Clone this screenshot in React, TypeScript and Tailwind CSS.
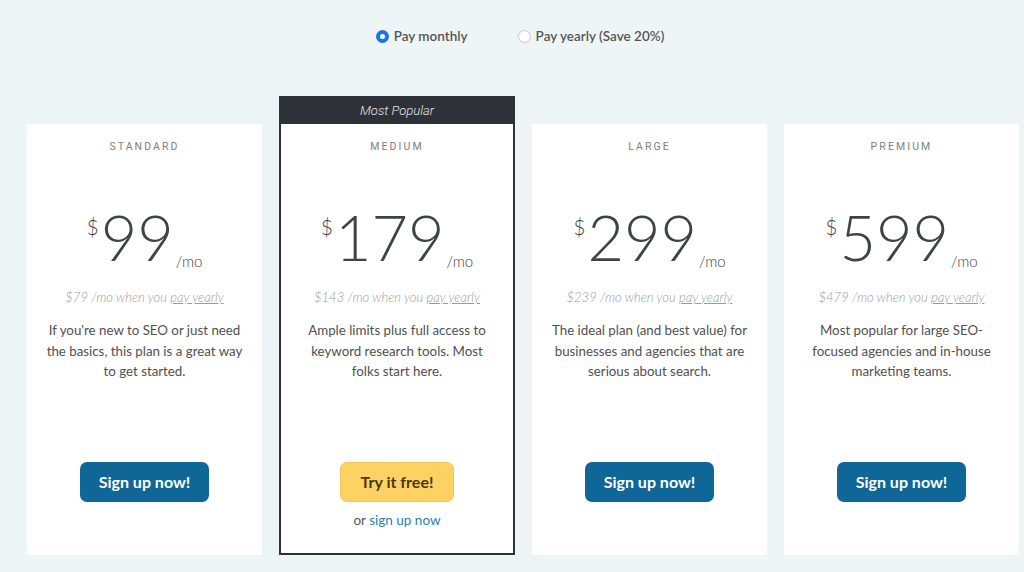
import React, { useState } from 'react';

type Plan = {
  name: string;
  price: string;
  yearly: string;
  desc: string;
  popular?: boolean;
};

const plans: Plan[] = [
  {
    name: 'Standard',
    price: '99',
    yearly: '$79',
    desc: "If you're new to SEO or just need the basics, this plan is a great way to get started.",
  },
  {
    name: 'Medium',
    price: '179',
    yearly: '$143',
    desc: 'Ample limits plus full access to keyword research tools. Most folks start here.',
    popular: true,
  },
  {
    name: 'Large',
    price: '299',
    yearly: '$239',
    desc: 'The ideal plan (and best value) for businesses and agencies that are serious about search.',
  },
  {
    name: 'Premium',
    price: '599',
    yearly: '$479',
    desc: 'Most popular for large SEO-focused agencies and in-house marketing teams.',
  },
];

const Radio = ({ checked }: { checked: boolean }) =>
  checked ? (
    <span className="box-border h-[13px] w-[13px] rounded-full border-[4px] border-[#1a73e8] bg-white" />
  ) : (
    <span className="box-border h-[13px] w-[13px] rounded-full border border-[#c8c8c8] bg-white" />
  );

const PlanBody = ({ plan }: { plan: Plan }) => (
  <div className="flex flex-1 flex-col items-center pt-[17px]">
    <p className="font-[Roboto,sans-serif] text-[10.5px] leading-[12px] tracking-[0.2em] text-[#808080] uppercase">
      {plan.name}
    </p>
    <div className="mt-[52px] flex items-start justify-center text-[#3f4346]">
      <span className="mt-[11px] mr-[2px] text-[21px] leading-none font-light">$</span>
      <span className="text-[63px] leading-none font-light">{plan.price}</span>
      <span className="mb-[-1px] ml-[2px] self-end text-[15px] leading-none font-light">/mo</span>
    </div>
    <p className="mt-[21px] text-[13px] leading-[16px] font-light text-[#9a9a9a] italic">
      {plan.yearly} /mo when you <span className="underline">pay yearly</span>
    </p>
    <p className="mt-[15px] px-[15px] text-center text-[13.3px] leading-[20.5px] text-[#505050]">
      {plan.desc}
    </p>
  </div>
);

export default function App() {
  const [yearly, setYearly] = useState(false);

  return (
    <div className="min-h-[572px] bg-[#eef5f6] font-[Lato,sans-serif]">
      <div className="flex h-[44px] items-end justify-center gap-[50px] pl-[16px]">
        <button className="flex h-[16px] items-center gap-[5px]" onClick={() => setYearly(false)}>
          <Radio checked={!yearly} />
          <span className="text-[13.5px] font-semibold text-[#555]">Pay monthly</span>
        </button>
        <button className="flex h-[16px] items-center gap-[5px]" onClick={() => setYearly(true)}>
          <Radio checked={yearly} />
          <span className="text-[13.5px] font-semibold text-[#555]">Pay yearly (Save 20%)</span>
        </button>
      </div>

      <div className="mt-[52px] flex items-end gap-[17px] pl-[27px]">
        {plans.map((plan) =>
          plan.popular ? (
            <div
              key={plan.name}
              className="box-border flex h-[459px] w-[236px] shrink-0 flex-col border-2 border-[#2f3139] bg-white"
            >
              <div className="flex h-[26px] items-center justify-center bg-[#2f3139] font-[Roboto,sans-serif] text-[13px] font-light text-[#e6e6e6] italic">
                Most Popular
              </div>
              <PlanBody plan={plan} />
              <div className="flex h-[91px] flex-col items-center">
                <button className="box-border h-[40px] w-[114px] rounded-[7px] border border-[#f3c555] bg-[#fdd262] text-[16px] font-bold text-[#4a3710]">
                  Try it free!
                </button>
                <p className="mt-[10px] text-[13.5px] leading-[16px] text-[#555]">
                  or <a className="text-[#2b7fb1]">sign up now</a>
                </p>
              </div>
            </div>
          ) : (
            <div key={plan.name} className="flex h-[431px] w-[235px] shrink-0 flex-col bg-white">
              <PlanBody plan={plan} />
              <div className="flex h-[93px] flex-col items-center">
                <button className="h-[40px] w-[129px] rounded-[7px] bg-[#0e6797] text-[16px] font-bold text-white">
                  Sign up now!
                </button>
              </div>
            </div>
          )
        )}
      </div>
    </div>
  );
}
